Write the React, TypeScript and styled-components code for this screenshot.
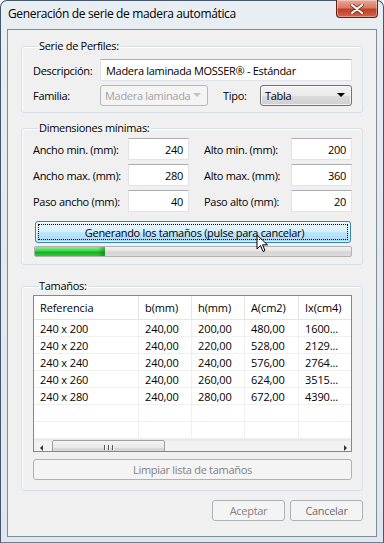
import * as React from 'react'
import styled, { createGlobalStyle } from 'styled-components'

const GlobalStyle = createGlobalStyle`
html, body {
  margin: 0;
  padding: 0;
  background: #fff;
}
* { box-sizing: border-box; }
`

const font = `"Open Sans", "Noto Sans", "DejaVu Sans", sans-serif`

const Window = styled.div`
width: 384px;
height: 543px;
display: flex;
flex-direction: column;
border: 1px solid #43566c;
border-bottom-color: #4d8fa6;
border-radius: 7px 7px 0 0;
padding: 0 6px 5px 6px;
background: linear-gradient(180deg, #e9eef3 0%, #e3e9ef 40%, #dfe6ed 100%);
font-family: ${font};
`

const TitleBar = styled.div`
height: 28px;
display: flex;
align-items: flex-start;
justify-content: space-between;
`

const Title = styled.div`
padding: 4px 0 0 1px;
font-size: 12px;
color: #000;
letter-spacing: -0.35px;
`

const CloseButton = styled.div`
width: 42px;
height: 18px;
margin-top: -1px;
margin-right: -1px;
border: 1px solid #5e2318;
border-top: none;
border-radius: 0 0 4px 4px;
background: linear-gradient(180deg, #eba898 0%, #d97a66 45%, #c33e24 55%, #d4644a 100%);
box-shadow: inset 0 0 0 1px rgba(255, 255, 255, 0.35);
display: flex;
align-items: center;
justify-content: center;
`

const Client = styled.div`
flex: 1;
border: 1px solid #7f8c9a;
background: #f0f0f0;
padding: 9px 13px 0 13px;
display: flex;
flex-direction: column;
font-size: 11px;
color: #000;
letter-spacing: -0.3px;
`

const Group = styled.fieldset<{ $gap?: number; $top?: number; $bottom?: number }>`
margin: 0 0 ${p => p.$gap ?? 0}px 0;
border: 1px solid #d5dfe5;
border-radius: 3px;
box-shadow: inset 1px 1px 0 #fff;
padding: ${p => p.$top ?? 3}px 10px ${p => p.$bottom ?? 7}px 11px;
min-width: 0;
`

const Legend = styled.legend`
padding: 0 2px 0 1px;
margin-left: 5px;
line-height: 14px;
`

const FormGrid = styled.div`
display: grid;
grid-template-columns: 67px 108px 1fr 92px;
grid-auto-rows: 22px;
row-gap: 3px;
align-items: center;
`

const Label = styled.span`
white-space: nowrap;
`

const TipoLabel = styled.span`
padding-left: 15px;
`

const TextBox = styled.div<{ $align?: string; $span?: number }>`
height: 22px;
grid-column: span ${p => p.$span ?? 1};
background: #fff;
border: 1px solid #e0e3e8;
border-top-color: #abadb3;
border-left-color: #e2e3ea;
padding: 0 5px 0 5px;
display: flex;
align-items: center;
justify-content: ${p => p.$align === 'right' ? 'flex-end' : 'flex-start'};
white-space: nowrap;
`

const Combo = styled.div<{ $disabled?: boolean }>`
height: 21px;
border: 1px solid ${p => p.$disabled ? '#b3b8bb' : '#707070'};
border-radius: 3px;
padding: 0 6px 0 4px;
display: flex;
align-items: center;
justify-content: space-between;
white-space: nowrap;
color: ${p => p.$disabled ? '#a3a3a3' : '#000'};
background: ${p => p.$disabled
    ? '#f4f4f4'
    : 'linear-gradient(180deg, #f2f2f2 0%, #ebebeb 50%, #dddddd 51%, #cfcfcf 100%)'};
box-shadow: ${p => p.$disabled ? 'none' : 'inset 0 0 0 1px rgba(255,255,255,0.7)'};
`

const Arrow = styled.span<{ $disabled?: boolean }>`
width: 0;
height: 0;
flex-shrink: 0;
border-left: 4px solid transparent;
border-right: 4px solid transparent;
border-top: 4px solid ${p => p.$disabled ? '#c3c3c3' : '#000'};
`

const DimGrid = styled.div`
display: grid;
grid-template-columns: 95px 61px 15px 87px 61px;
grid-auto-rows: 22px;
row-gap: 4px;
align-items: center;
`

const Spacer = styled.span``

const GenerateButton = styled.div`
position: relative;
margin: 9px 0 0 2px;
width: 316px;
height: 22px;
border: 1px solid #3c7fb1;
border-radius: 3px;
background: linear-gradient(180deg, #eaf6fd 0%, #d9f0fc 50%, #bee6fd 51%, #a7d9f5 100%);
box-shadow: inset 0 0 0 1px rgba(255,255,255,0.6);
display: flex;
align-items: center;
justify-content: center;
padding-left: 3px;

&::after {
  content: '';
  position: absolute;
  inset: 2px;
  border: 1px dotted #000;
}
`

const Cursor = styled.svg`
position: absolute;
left: 220px;
top: 12px;
`

const Progress = styled.div`
margin: 3px 0 0 1px;
width: 318px;
height: 11px;
border: 1px solid #b2b2b2;
border-radius: 2px;
background: linear-gradient(180deg, #f3f3f3 0%, #e4e4e4 45%, #d4d4d4 55%, #dcdcdc 100%);
overflow: hidden;
`

const ProgressFill = styled.div`
height: 100%;
background: linear-gradient(180deg, #a8eea0 0%, #3fd84a 40%, #10b41f 60%, #3ec944 100%);
box-shadow: inset -6px 0 4px -2px rgba(0, 120, 0, 0.5);
`

const ListView = styled.div`
height: 157px;
border: 1px solid #828790;
background: #fff;
display: flex;
flex-direction: column;
margin-top: 1px;
overflow: hidden;
`

const Row = styled.div<{ $header?: boolean }>`
display: grid;
grid-template-columns: 105px 53px 53px 54px 53px 1fr;
height: ${p => p.$header ? 24 : 17}px;
flex-shrink: 0;
border-bottom: 1px solid ${p => p.$header ? '#e5e5e5' : '#f0f0f0'};
`

const Cell = styled.div<{ $header?: boolean }>`
border-right: 1px solid ${p => p.$header ? '#e5e5e5' : '#f0f0f0'};
padding: 0 0 0 6px;
display: flex;
align-items: center;
white-space: nowrap;
overflow: hidden;
letter-spacing: -0.1px;

&:last-child { border-right: none; }
`

const Filler = styled.div`
flex: 1;
`

const HScroll = styled.div`
height: 17px;
flex-shrink: 0;
display: flex;
align-items: center;
background: linear-gradient(180deg, #e6e6e6 0%, #f2f2f2 20%, #f2f2f2 80%, #e8e8e8 100%);
padding: 0 4px 0 6px;
`

const ScrollArrow = styled.span<{ $right?: boolean }>`
width: 0;
height: 0;
border-top: 3px solid transparent;
border-bottom: 3px solid transparent;
${p => p.$right ? 'border-left: 3px solid #333;' : 'border-right: 3px solid #333;'}
`

const Thumb = styled.div`
width: 113px;
height: 15px;
margin-left: 9px;
border: 1px solid #9f9f9f;
border-radius: 2px;
background: linear-gradient(180deg, #f4f4f4 0%, #e8e8e8 50%, #d9d9d9 51%, #d1d1d1 100%);
display: flex;
align-items: center;
justify-content: center;
gap: 1px;
`

const Grip = styled.span`
width: 1px;
height: 5px;
background: #555;
box-shadow: 1px 0 0 #fff;
margin: 0 1px;
`

const ThumbSpace = styled.div`
flex: 1;
`

const PushButton = styled.div<{ $width?: number; $dim?: boolean }>`
height: 21px;
width: ${p => p.$width ? `${p.$width}px` : '100%'};
border: 1px solid #adb2b5;
border-radius: 3px;
background: #f4f4f4;
color: ${p => p.$dim ? '#838383' : '#6f6f6f'};
display: flex;
align-items: center;
justify-content: center;
`

const ListFooter = styled.div`
margin-top: 7px;
`

const Buttons = styled.div`
display: flex;
justify-content: flex-end;
gap: 5px;
margin-top: 9px;
`

const columns = ['Referencia', 'b(mm)', 'h(mm)', 'A(cm2)', 'Ix(cm4)']
const rows = [
  ['240 x 200', '240,00', '200,00', '480,00', '1600...'],
  ['240 x 220', '240,00', '220,00', '528,00', '2129...'],
  ['240 x 240', '240,00', '240,00', '576,00', '2764...'],
  ['240 x 260', '240,00', '260,00', '624,00', '3515...'],
  ['240 x 280', '240,00', '280,00', '672,00', '4390...'],
  ['', '', '', '', ''],
  ['', '', '', '', ''],
]

const dims = [
  ['Ancho min. (mm):', '240', 'Alto min. (mm):', '200'],
  ['Ancho max. (mm):', '280', 'Alto max. (mm):', '360'],
  ['Paso ancho (mm):', '40', 'Paso alto (mm):', '20'],
]

export default function App() {
  return (
    <>
      <GlobalStyle />
      <Window>
        <TitleBar>
          <Title>Generación de serie de madera automática</Title>
          <CloseButton>
            <svg width="14" height="10" viewBox="0 0 14 10">
              <path d="M2 1 L12 9 M12 1 L2 9" stroke="#7a2a1c" strokeWidth="3.6" strokeLinecap="round" />
              <path d="M2 1 L12 9 M12 1 L2 9" stroke="#fff" strokeWidth="2.2" strokeLinecap="round" />
            </svg>
          </CloseButton>
        </TitleBar>
        <Client>
          <Group $gap={8} $top={6} $bottom={6}>
            <Legend>Serie de Perfiles:</Legend>
            <FormGrid>
              <Label>Descripción:</Label>
              <TextBox $span={3}>Madera laminada MOSSER® - Estándar</TextBox>
              <Label>Familia:</Label>
              <Combo $disabled>
                <span>Madera laminada</span>
                <Arrow $disabled />
              </Combo>
              <TipoLabel>Tipo:</TipoLabel>
              <Combo>
                <span>Tabla</span>
                <Arrow />
              </Combo>
            </FormGrid>
          </Group>

          <Group $gap={14} $top={3}>
            <Legend>Dimensiones mínimas:</Legend>
            <DimGrid>
              {dims.map(d => (
                <React.Fragment key={d[0]}>
                  <Label>{d[0]}</Label>
                  <TextBox $align="right">{d[1]}</TextBox>
                  <Spacer />
                  <Label>{d[2]}</Label>
                  <TextBox $align="right">{d[3]}</TextBox>
                </React.Fragment>
              ))}
            </DimGrid>
            <GenerateButton>
              Generando los tamaños (pulse para cancelar)
              <Cursor width="13" height="20" viewBox="0 0 13 20">
                <path d="M1 1 L1 15 L4.5 11.5 L7 17.5 L9 16.6 L6.6 10.8 L11.5 10.8 Z" fill="#fff" stroke="#000" strokeWidth="1" strokeLinejoin="miter" />
              </Cursor>
            </GenerateButton>
            <Progress>
              <ProgressFill style={{ width: '22%' }} />
            </Progress>
          </Group>

          <Group $top={1} $bottom={10}>
            <Legend>Tamaños:</Legend>
            <ListView>
              <Row $header>
                {columns.map(c => <Cell key={c} $header>{c}</Cell>)}
                <Cell $header />
              </Row>
              {rows.map((r, i) => (
                <Row key={i}>
                  {r.map((v, j) => <Cell key={j}>{v}</Cell>)}
                  <Cell />
                </Row>
              ))}
              <Filler />
              <HScroll>
                <ScrollArrow />
                <Thumb>
                  <Grip /><Grip /><Grip />
                </Thumb>
                <ThumbSpace />
                <ScrollArrow $right />
              </HScroll>
            </ListView>
            <ListFooter>
              <PushButton $dim>Limpiar lista de tamaños</PushButton>
            </ListFooter>
          </Group>

          <Buttons>
            <PushButton $width={73} $dim>Aceptar</PushButton>
            <PushButton $width={73}>Cancelar</PushButton>
          </Buttons>
        </Client>
      </Window>
    </>
  )
}
